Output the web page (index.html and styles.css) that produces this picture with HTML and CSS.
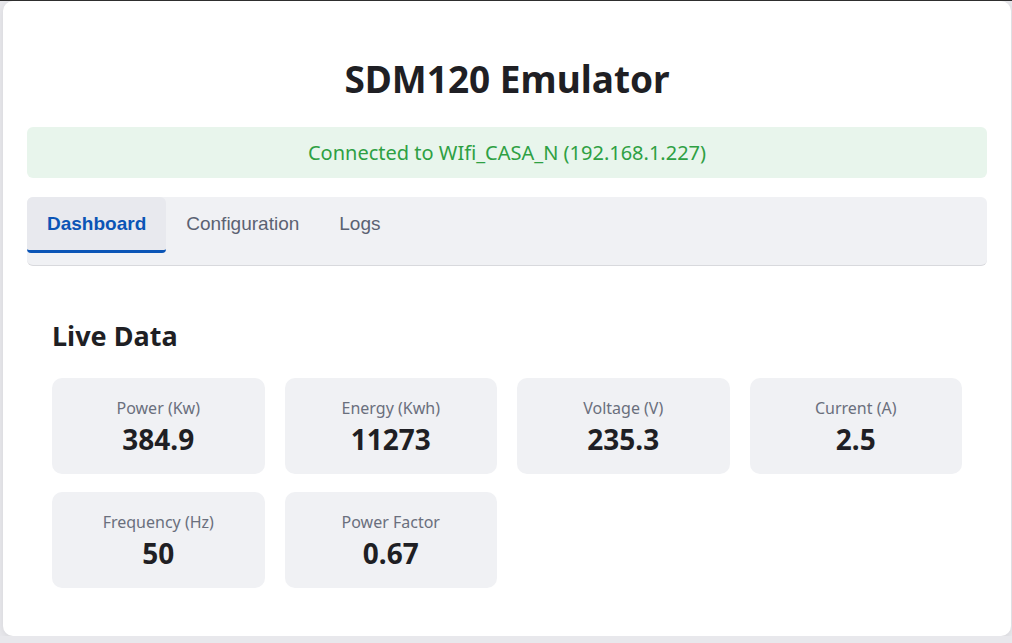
FILE: index.html
```html
<!DOCTYPE html>
<html lang="en">
<head>
<meta charset="utf-8">
<title>SDM120 Emulator</title>
<link rel="stylesheet" href="styles.css">
</head>
<body>
<div class="page">
  <main class="card">
    <h1 class="title">SDM120 Emulator</h1>
    <div class="status">Connected to WIfi_CASA_N (192.168.1.227)</div>
    <nav class="tabs">
      <button class="tab active">Dashboard</button>
      <button class="tab">Configuration</button>
      <button class="tab">Logs</button>
    </nav>
    <section class="panel">
      <h2 class="panel-title">Live Data</h2>
      <div class="stats">
        <div class="stat"><div class="stat-label">Power (Kw)</div><div class="stat-value">384.9</div></div>
        <div class="stat"><div class="stat-label">Energy (Kwh)</div><div class="stat-value">11273</div></div>
        <div class="stat"><div class="stat-label">Voltage (V)</div><div class="stat-value">235.3</div></div>
        <div class="stat"><div class="stat-label">Current (A)</div><div class="stat-value">2.5</div></div>
        <div class="stat"><div class="stat-label">Frequency (Hz)</div><div class="stat-value">50</div></div>
        <div class="stat"><div class="stat-label">Power Factor</div><div class="stat-value">0.67</div></div>
      </div>
    </section>
  </main>
</div>
</body>
</html>
```

FILE: styles.css
```css
html, body {
  margin: 0;
  padding: 0;
}
body {
  background: #e8e8ec;
  border-top: 1px solid #2e2e2e;
  font-family: "Noto Sans", "Open Sans", sans-serif;
  color: #1f1f24;
}
.page {
  padding: 0 1px 0 3px;
}
.card {
  background: #ffffff;
  border-radius: 10px;
  box-shadow: 0 2px 8px rgba(0, 0, 0, 0.08);
  padding: 53px 24px 0 24px;
  height: 635px;
  box-sizing: border-box;
}
.title {
  margin: 0 0 23px 0;
  text-align: center;
  font-size: 37px;
  font-weight: 700;
  line-height: 50px;
}
.status {
  background: #e8f5ec;
  color: #2ea043;
  border-radius: 6px;
  height: 51px;
  display: flex;
  align-items: center;
  justify-content: center;
  font-size: 20px;
}
.tabs {
  margin-top: 19px;
  background: #f0f1f4;
  border-radius: 6px;
  border-bottom: 1px solid #d8d9dd;
  display: flex;
  height: 69px;
  box-sizing: border-box;
  align-items: flex-start;
}
.tab {
  font-family: "Liberation Sans", Arial, sans-serif;
  font-size: 19px;
  color: #5b6272;
  background: transparent;
  border: none;
  border-bottom: 3px solid transparent;
  padding: 16px 20px 15px 20px;
  border-radius: 6px 6px 4px 4px;
  line-height: 22px;
  cursor: pointer;
}
.tab.active {
  color: #0b55b6;
  font-weight: 700;
  background: #e8e9ee;
  border-bottom-color: #0b55b6;
}
.panel {
  padding: 50px 25px 0 25px;
}
.panel-title {
  margin: 0 0 22px 0;
  font-size: 27px;
  font-weight: 700;
  line-height: 40px;
}
.stats {
  display: grid;
  grid-template-columns: repeat(4, 1fr);
  gap: 18px 20px;
}
.stat {
  background: #f0f1f4;
  border-radius: 10px;
  height: 96px;
  box-sizing: border-box;
  padding-top: 19px;
  text-align: center;
}
.stat-label {
  font-size: 16px;
  color: #6a6f7d;
  line-height: 22px;
}
.stat-value {
  margin-top: 2px;
  font-size: 28px;
  font-weight: 700;
  line-height: 36px;
  color: #1f1f24;
}
```
